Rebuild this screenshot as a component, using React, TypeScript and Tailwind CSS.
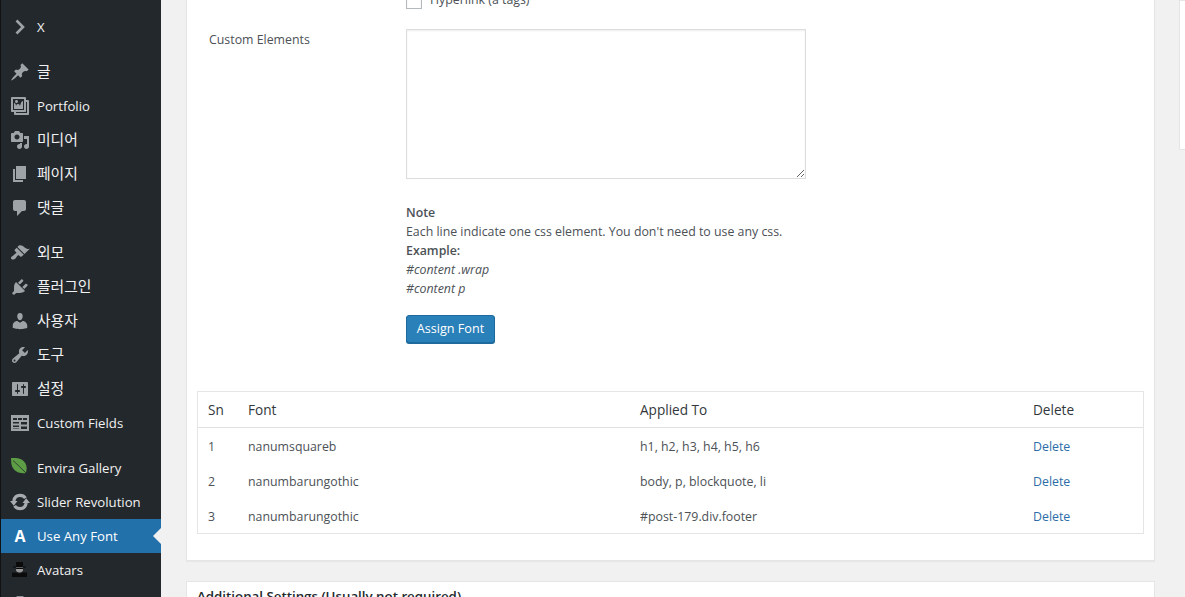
import type { ReactNode } from 'react'

function Dash({ d, className = 'text-[#9ea3a8]' }: { d: string; className?: string }) {
  return (
    <svg viewBox="0 0 20 20" className={`w-5 h-5 ${className}`} fill="currentColor" fillRule="evenodd">
      <path d={d} />
    </svg>
  )
}

const icons: Record<string, ReactNode> = {
  chevron: (
    <svg viewBox="0 0 20 20" className="w-5 h-5 text-[#9ea3a8]" fill="none" stroke="currentColor" strokeWidth="2.6">
      <path d="M6.5 3.5L13 10l-6.5 6.5" />
    </svg>
  ),
  post: <Dash d="M10.44 3.02l1.82-1.82 6.36 6.35-1.83 1.82c-1.05-.68-2.48-.57-3.41.36l-.75.75c-.92.93-1.04 2.35-.35 3.41l-1.83 1.82-2.41-2.41-2.8 2.79c-.42.42-3.38 2.71-3.8 2.29s1.86-3.39 2.28-3.81l2.79-2.79L4.1 9.36l1.83-1.82c1.05.69 2.48.57 3.4-.36l.75-.75c.93-.92 1.05-2.35.36-3.41z" />,
  gallery: <Dash d="M16 4h1.96c.57 0 1.04.47 1.04 1.04v12.92c0 .57-.47 1.04-1.04 1.04H5.04C4.47 19 4 18.53 4 17.96V16H2.04C1.47 16 1 15.53 1 14.96V2.04C1 1.47 1.47 1 2.04 1h12.92c.57 0 1.04.47 1.04 1.04V4zM3 14h11V3H3v11zm5-8.5C8 4.67 7.33 4 6.5 4S5 4.67 5 5.5 5.67 7 6.5 7 8 6.33 8 5.5zm2 4.5s1-5 3-5v8H4V7c2 0 2 3 2 3s.33-2 2-2 2 2 2 2zm7 7V6h-1v8.96c0 .57-.47 1.04-1.04 1.04H6v1h11z" />,
  media: <Dash d="M13 11V4c0-.55-.45-1-1-1h-1.67L9 1H5L3.67 3H2c-.55 0-1 .45-1 1v7c0 .55.45 1 1 1h10c.55 0 1-.45 1-1zM7 4.5c1.38 0 2.5 1.12 2.5 2.5S8.38 9.5 7 9.5 4.5 8.38 4.5 7 5.62 4.5 7 4.5zM14 6h5v10.5c0 1.38-1.12 2.5-2.5 2.5S14 17.88 14 16.5s1.12-2.5 2.5-2.5c.17 0 .34.02.5.05V9h-3V6zm-4 8.05V13h2v3.5c0 1.38-1.12 2.5-2.5 2.5S7 17.88 7 16.5 8.12 14 9.5 14c.17 0 .34.02.5.05z" />,
  page: <Dash d="M6 15V2h10v13H6zm-1 1h8v2H3V5h2v11z" />,
  comments: <Dash d="M5 2h9c1.1 0 2 .9 2 2v7c0 1.1-.9 2-2 2h-2l-5 5v-5H5c-1.1 0-2-.9-2-2V4c0-1.1.9-2 2-2z" />,
  brush: <Dash d="M14.48 11.06L7.41 3.99l1.5-1.5c.5-.56 2.3-.47 3.51.32 1.21.8 1.43 1.28 2.91 2.1 1.18.64 2.45 1.26 4.45.85zm-.71.71L6.7 4.7 4.93 6.47c-.39.39-.39 1.02 0 1.41l1.06 1.06c.39.39.39 1.03 0 1.42-.6.6-1.43 1.11-2.21 1.69-.35.26-.7.53-1.01.84C1.43 13.23.4 14.98 1.4 16s3.11.3 3.77-.35c.31-.31.58-.66.84-1.01.58-.78 1.09-1.61 1.69-2.21.39-.39 1.02-.39 1.41 0l1.06 1.06c.39.39 1.02.39 1.41 0z" />,
  plugin: <Dash d="M13.11 4.36L9.87 7.6 8 5.73l3.24-3.24c.35-.34 1.05-.2 1.56.32.52.51.66 1.21.31 1.55zm-8 1.77l.91-1.12 9.01 9.01-1.19.84c-.71.71-2.63 1.16-3.82 1.16H6.14L4.9 17.26c-.59.59-1.54.59-2.12 0-.59-.58-.59-1.53 0-2.12l1.24-1.24v-3.88c0-1.13.4-3.19 1.09-3.89zm7.26 3.97l3.24-3.24c.34-.35 1.04-.21 1.55.31.52.51.66 1.21.31 1.55l-3.24 3.25z" />,
  users: <Dash d="M10 9.25c-2.27 0-2.73-3.44-2.73-3.44C7 4.02 7.82 2 9.97 2c2.16 0 2.98 2.02 2.71 3.81 0 0-.41 3.44-2.68 3.44zm0 2.57L12.72 10c2.39 0 4.52 2.33 4.52 4.53v2.49s-3.65 1.13-7.24 1.13c-3.65 0-7.24-1.13-7.24-1.13v-2.49c0-2.25 1.94-4.48 4.47-4.48z" />,
  tools: <Dash d="M16.68 9.77c-1.34 1.34-3.3 1.67-4.95.99l-5.41 6.52c-.99.99-2.59.99-3.58 0s-.99-2.59 0-3.57l6.52-5.42c-.68-1.65-.35-3.61.99-4.95 1.28-1.28 3.12-1.62 4.72-1.06l-2.89 2.89 2.82 2.82 2.86-2.87c.53 1.58.18 3.39-1.08 4.65zM3.81 16.21c.4.39 1.04.39 1.43 0 .4-.4.4-1.04 0-1.43-.39-.4-1.03-.4-1.43 0-.39.39-.39 1.03 0 1.43z" />,
  settings: <Dash d="M18 16V4c0-.55-.45-1-1-1H3c-.55 0-1 .45-1 1v12c0 .55.45 1 1 1h14c.55 0 1-.45 1-1zM8 11h1c.55 0 1 .45 1 1s-.45 1-1 1H8v1.5c0 .28-.22.5-.5.5s-.5-.22-.5-.5V13H6c-.55 0-1-.45-1-1s.45-1 1-1h1V5.5c0-.28.22-.5.5-.5s.5.22.5.5V11zm5-2h-1c-.55 0-1-.45-1-1s.45-1 1-1h1V5.5c0-.28.22-.5.5-.5s.5.22.5.5V7h1c.55 0 1 .45 1 1s-.45 1-1 1h-1v5.5c0 .28-.22.5-.5.5s-.5-.22-.5-.5V9z" />,
  fields: <Dash d="M1 2h18v16H1V2zm2 3v2h4V5H3zm5 0v2h4V5H8zm5 0v2h4V5h-4zM3 9v1.500h6V9H3zm8 0v2.500h6V9h-6zM3 12.500V14h6v-1.500H3zm8 1V16h6v-2.500h-6zM3 15.500V16h6v-.5H3z" />,
  leaf: (
    <svg viewBox="0 0 20 20" className="w-5 h-5">
      <path d="M1 0c6-.5 12 .6 14.500 5.500 1.700 3.300 1.200 6.500.5 9.500C10 16 3.500 13.500 1.800 7.500 1.200 5.500 1.200 2.500 1 0z" fill="#5d9d45" />
      <path d="M3 2.500c4 4 9 8 13 12.500l2 2" fill="none" stroke="#23282d" strokeWidth="0.8" />
    </svg>
  ),
  refresh: (
    <svg viewBox="0 0 20 20" className="w-5 h-5 text-[#a8acb0]" fill="none" stroke="currentColor" strokeWidth="3.2">
      <path d="M3.800 9C4.400 5.500 7 3.400 10 3.400c2.400 0 4.300 1.100 5.500 2.800" />
      <path d="M16.200 11c-.6 3.500-3.200 5.600-6.200 5.600-2.400 0-4.300-1.100-5.500-2.800" />
      <path d="M0 9h7.500l-3.700 4.800zM20 11h-7.500l3.700-4.800z" fill="currentColor" stroke="none" />
    </svg>
  ),
  letter: <span className="w-5 text-center text-white text-[16px] font-bold leading-5">A</span>,
  spy: (
    <svg viewBox="0 0 20 20" className="w-5 h-5">
      <path d="M6 2h7v4.500h3v1H3v-1h3z" fill="#0b0b0b" />
      <path d="M6 7.500h7V10c0 1.500-1.500 2.500-3.500 2.500S6 11.500 6 10z" fill="#9a9a9a" />
      <path d="M6 8h7v1H6z" fill="#0b0b0b" />
      <path d="M2 12.500h4.500c.8.600 1.800 1 3 1s2.200-.4 3-1H17V17H2z" fill="#0b0b0b" />
    </svg>
  ),
  stub: (
    <svg viewBox="0 0 20 20" className="w-5 h-5">
      <path d="M6.500 2h7v6h-7z" fill="#8f9396" />
    </svg>
  ),
}

type Item = { icon: string; label: string; active?: boolean; gap?: boolean; ko?: boolean }

const menu: Item[] = [
  { icon: 'chevron', label: 'X' },
  { icon: 'post', label: '글', gap: true, ko: true },
  { icon: 'gallery', label: 'Portfolio' },
  { icon: 'media', label: '미디어', ko: true },
  { icon: 'page', label: '페이지', ko: true },
  { icon: 'comments', label: '댓글', ko: true },
  { icon: 'brush', label: '외모', gap: true, ko: true },
  { icon: 'plugin', label: '플러그인', ko: true },
  { icon: 'users', label: '사용자', ko: true },
  { icon: 'tools', label: '도구', ko: true },
  { icon: 'settings', label: '설정', ko: true },
  { icon: 'fields', label: 'Custom Fields' },
  { icon: 'leaf', label: 'Envira Gallery', gap: true },
  { icon: 'refresh', label: 'Slider Revolution' },
  { icon: 'letter', label: 'Use Any Font', active: true },
  { icon: 'spy', label: 'Avatars' },
  { icon: 'stub', label: '' },
]

const rows = [
  { sn: 1, font: 'nanumsquareb', applied: 'h1, h2, h3, h4, h5, h6' },
  { sn: 2, font: 'nanumbarungothic', applied: 'body, p, blockquote, li' },
  { sn: 3, font: 'nanumbarungothic', applied: '#post-179.div.footer' },
]

function Sidebar() {
  return (
    <nav className="w-[161px] shrink-0 bg-[#23282d] border-l border-l-[#101214] pt-[10px] text-[13.2px] text-[#f1f1f1]">
      {menu.map((item, i) => (
        <div
          key={i}
          className={`relative flex items-center h-[34px] pl-[9px] ${item.gap ? 'mt-[11px]' : ''} ${item.active ? 'bg-[#2271ab] text-white' : ''}`}
        >
          {icons[item.icon]}
          <span className={`ml-[7px] leading-none ${item.ko ? 'text-[14.8px] -mt-[2px]' : 'mt-[2px]'}`}>{item.label}</span>
          {item.active && (
            <span className="absolute right-0 top-[9px] border-y-[8px] border-r-[8px] border-y-transparent border-r-[#f1f1f1]" />
          )}
        </div>
      ))}
    </nav>
  )
}

export default function App() {
  return (
    <div className="flex h-[597px] overflow-hidden bg-[#f1f1f1] text-[#4c5156] text-[12.35px] font-['Open_Sans','Noto_Sans_CJK_KR',sans-serif]">
      <Sidebar />
      <main className="flex-1 flex items-start pl-[25px] min-w-0">
        <div className="w-[969px] shrink-0">
          {/* Assign font card, its top is scrolled away */}
          <section className="bg-white border border-[#e5e5e5] shadow-[0_1px_1px_rgba(0,0,0,0.04)] h-[570px] -mt-[9px] pl-[10px] pr-[9px]">
            <div className="flex items-center ml-[209px] h-[17px]">
              <span className="w-4 h-4 border border-[#b4b9be] bg-white shadow-[inset_0_1px_2px_rgba(0,0,0,0.1)]" />
              <span className="ml-2">Hyperlink (a tags)</span>
            </div>
            <div className="flex mt-[20px]">
              <label className="w-[197px] ml-[12px] mt-[2px]">Custom Elements</label>
              <div className="w-[400px]">
                <textarea className="block w-[400px] h-[150px] border border-[#dddddd] bg-white shadow-[inset_0_1px_2px_rgba(0,0,0,0.07)] outline-none" />
                <div className="mt-[24px] leading-[19px]">
                  <p className="font-semibold">Note</p>
                  <p className="whitespace-nowrap">Each line indicate one css element. You don't need to use any css.</p>
                  <p className="font-semibold">Example:</p>
                  <p className="italic">#content .wrap</p>
                  <p className="italic">#content p</p>
                </div>
                <button className="mt-[17px] w-[89px] h-[28px] rounded-[3px] border border-[#1f6a9c] bg-[#2a80b9] text-white text-[12.6px] shadow-[0_1px_0_#1f6a9c]">
                  Assign Font
                </button>
              </div>
            </div>
            <table className="table-fixed w-[947px] mt-[48px] border border-[#e5e5e5] border-separate border-spacing-0">
              <colgroup>
                <col className="w-[40px]" />
                <col className="w-[392px]" />
                <col className="w-[393px]" />
                <col className="w-[120px]" />
              </colgroup>
              <thead>
                <tr className="h-[36px] text-left text-[13.6px] text-[#32373c]">
                  <th className="pl-[10px] pt-[2px] font-normal border-b border-[#e1e1e1]">Sn</th>
                  <th className="pl-[10px] pt-[2px] font-normal border-b border-[#e1e1e1]">Font</th>
                  <th className="pl-[10px] pt-[2px] font-normal border-b border-[#e1e1e1]">Applied To</th>
                  <th className="pl-[10px] pt-[2px] font-normal border-b border-[#e1e1e1]">Delete</th>
                </tr>
              </thead>
              <tbody>
                {rows.map((r) => (
                  <tr key={r.sn} className="h-[35px]">
                    <td className="pl-[10px] pt-[3px]">{r.sn}</td>
                    <td className="pl-[10px] pt-[3px]">{r.font}</td>
                    <td className="pl-[10px] pt-[3px]">{r.applied}</td>
                    <td className="pl-[10px] pt-[3px] text-[#2d6ca8]">Delete</td>
                  </tr>
                ))}
              </tbody>
            </table>
          </section>
          <section className="mt-[20px] h-[40px] bg-white border border-[#e5e5e5] pl-[10px] pt-[5px] text-[13.3px] font-semibold text-[#23282d]">
            Additional Settings (Usually not required)
          </section>
        </div>
        <div className="ml-[24px] w-[40px] h-[150px] shrink-0 bg-white border border-[#e5e5e5]" />
      </main>
    </div>
  )
}
